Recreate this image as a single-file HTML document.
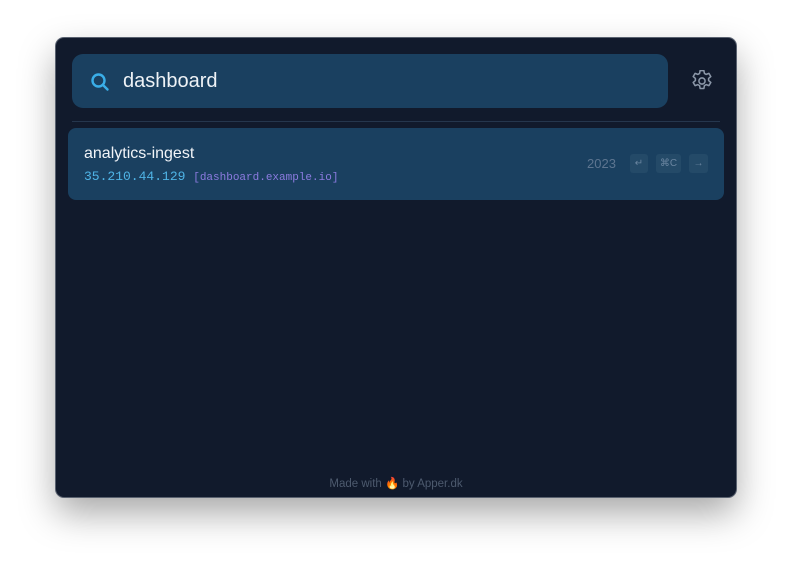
<!DOCTYPE html>
<html><head><meta charset="utf-8"><style>
*{margin:0;padding:0;box-sizing:border-box}
body{width:792px;height:572px;background:#fff;position:relative;overflow:hidden;font-family:"Liberation Sans",sans-serif}
.win{position:absolute;left:56px;top:38px;width:680px;height:459px;background:#111a2c;border-radius:8px;box-shadow:0 0 0 1px #5a6270,0 16px 36px rgba(0,0,0,.35)}
.search{position:absolute;left:16px;top:16px;width:596px;height:54px;background:#1a4060;border-radius:11px}
.search svg{position:absolute;left:18px;top:18px}
.search .q{position:absolute;left:51px;top:16px;font-size:20px;color:#eef2f6}
.gear{position:absolute;left:635px;top:32px}
.div{position:absolute;left:16px;top:83px;width:648px;height:1px;background:#25364d}
.res{position:absolute;left:12px;top:90px;width:656px;height:72px;background:#1a4060;border-radius:8px}
.t{position:absolute;left:16px;top:17px;font-size:16px;color:#f1f4f8}
.ip{position:absolute;left:16px;top:41px;font-family:"Liberation Mono",monospace;font-size:13px;color:#4fb4e6}
.ip span{font-size:11px;color:#8c7be0}
.yr{position:absolute;left:519px;top:28px;font-size:13px;color:#5d7590}
.k{position:absolute;top:26px;height:19px;background:#244a68;border-radius:3px;color:#6a85a0;font-size:10px;text-align:center;line-height:19px}
.foot{position:absolute;left:0;width:100%;top:438px;text-align:center;font-size:11.5px;color:#4d5a6e}
</style></head><body>
<div class="win">
<div class="search">
<svg width="20" height="20" viewBox="0 0 20 20" fill="none" stroke="#3aaee8" stroke-width="2.4" stroke-linecap="round"><circle cx="8.5" cy="8.5" r="6"/><path d="M13 13l4.5 4.5"/></svg>
<div class="q">dashboard</div></div>
<svg class="gear" width="22" height="22" viewBox="2 2 20 20" fill="none" stroke="#8b97a8" stroke-width="1.4" stroke-linejoin="round"><path d="M10.3 2.5h3.4l.5 2.6 1.6.9 2.5-.9 1.7 2.9-2 1.7v1.9l2 1.7-1.7 2.9-2.5-.9-1.6.9-.5 2.6h-3.4l-.5-2.6-1.6-.9-2.5.9-1.7-2.9 2-1.7v-1.9l-2-1.7 1.7-2.9 2.5.9 1.6-.9z"/><circle cx="12" cy="12" r="2.8"/></svg>
<div class="div"></div>
<div class="res">
<div class="t">analytics-ingest</div>
<div class="ip">35.210.44.129 <span>[dashboard.example.io]</span></div>
<div class="yr">2023</div>
<div class="k" style="left:562px;width:18px">↵</div>
<div class="k" style="left:588px;width:25px">⌘C</div>
<div class="k" style="left:621px;width:19px">→</div>
</div>
<div class="foot">Made with 🔥 by Apper.dk</div>
</div>
</body></html>
